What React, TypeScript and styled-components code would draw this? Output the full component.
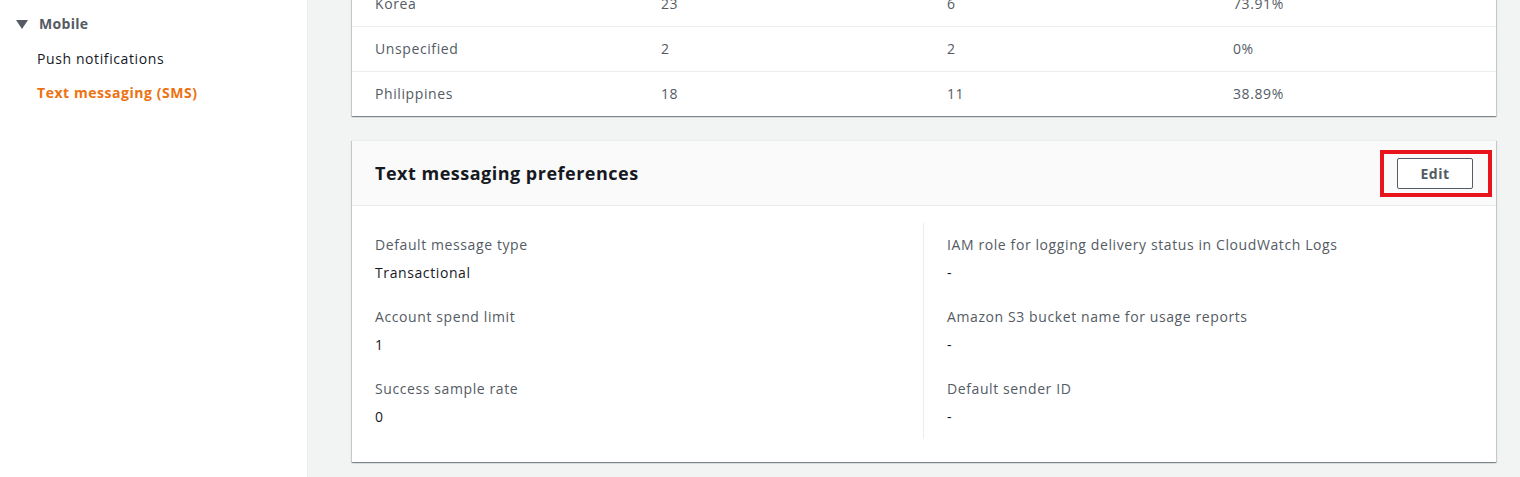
import React from "react";
import styled, { createGlobalStyle } from "styled-components";

const Global = createGlobalStyle`
  html, body { margin: 0; padding: 0; height: 100%; }
  body {
    font-family: "Open Sans", "Noto Sans", "Liberation Sans", Arial, sans-serif;
    font-size: 14px;
    line-height: 22px;
    letter-spacing: 0.6px;
    color: #16191f;
    background: #f2f3f3;
    overflow: hidden;
  }
  #root { height: 100%; }
`;

const Page = styled.div`
  display: flex;
  height: 477px;
  overflow: hidden;
`;

const Sidebar = styled.nav`
  width: 308px;
  flex: none;
  background: #ffffff;
  border-right: 1px solid #eaeded;
  padding-top: 13px;
  box-sizing: border-box;
`;

const SectionHead = styled.div`
  display: flex;
  align-items: center;
  gap: 11px;
  padding-left: 16px;
  font-weight: 700;
  letter-spacing: 0.3px;
  color: #545b64;
  height: 22px;
`;

const Caret = styled.span`
  width: 0;
  height: 0;
  border-left: 6px solid transparent;
  border-right: 6px solid transparent;
  border-top: 9px solid #545b64;
  margin-top: 1px;
`;

const NavList = styled.ul`
  list-style: none;
  margin: 13px 0 0;
  padding: 0 0 0 37px;
  display: flex;
  flex-direction: column;
  gap: 12px;
`;

const NavItem = styled.li<{ $active?: boolean }>`
  color: ${(p) => (p.$active ? "#ec7211" : "#16191f")};
  font-weight: ${(p) => (p.$active ? 700 : 400)};
  letter-spacing: ${(p) => (p.$active ? "0.55px" : "0.6px")};
  line-height: 22px;
`;

const Main = styled.main`
  flex: 1;
  padding: 0 24px 0 44px;
  display: flex;
  flex-direction: column;
  gap: 24px;
  margin-top: -19px;
`;

const Card = styled.section`
  background: #ffffff;
  border-top: 1px solid #eaeded;
  box-shadow: 0 1px 1px 0 rgba(0, 28, 36, 0.3),
    1px 1px 1px 0 rgba(0, 28, 36, 0.15),
    -1px 1px 1px 0 rgba(0, 28, 36, 0.15);
`;

const Table = styled.table`
  width: 100%;
  border-collapse: collapse;
  table-layout: fixed;
`;

const Row = styled.tr<{ $last?: boolean }>`
  border-bottom: ${(p) => (p.$last ? "none" : "1px solid #eaeded")};
`;

const Cell = styled.td`
  padding: 11px 23px 11px 23px;
  height: 22px;
  color: #545b64;
  line-height: 22px;
`;

const Header = styled.div`
  display: flex;
  align-items: center;
  justify-content: space-between;
  height: 64px;
  padding: 0 23px;
  background: #fafafa;
  border-bottom: 1px solid #eaeded;
`;

const Title = styled.h2`
  margin: 0;
  font-size: 18px;
  font-weight: 700;
  line-height: 22px;
  letter-spacing: 0.5px;
  color: #16191f;
`;

const Highlight = styled.div`
  position: relative;
  display: flex;
`;

const RedBox = styled.span`
  position: absolute;
  top: -8px;
  bottom: -8px;
  left: -17px;
  right: -19px;
  border: 4px solid #e8141c;
  pointer-events: none;
`;

const Button = styled.button`
  width: 76px;
  height: 31px;
  box-sizing: border-box;
  background: #ffffff;
  border: 1px solid #545b64;
  border-radius: 2px;
  font-family: inherit;
  font-size: 14px;
  font-weight: 700;
  letter-spacing: 0.5px;
  color: #545b64;
  padding: 0;
  cursor: pointer;
`;

const Body = styled.div`
  display: grid;
  grid-template-columns: calc(50% - 1px) 1fr;
  padding: 17px 0 23px;
`;

const Column = styled.div<{ $divided?: boolean }>`
  display: flex;
  flex-direction: column;
  gap: 22px;
  padding: 11px 23px 11px 23px;
  border-left: ${(p) => (p.$divided ? "1px solid #eaeded" : "none")};
`;

const Pair = styled.div`
  display: flex;
  flex-direction: column;
  gap: 6px;
`;

const Label = styled.div`
  color: #545b64;
  line-height: 22px;
`;

const Value = styled.div`
  color: #16191f;
  line-height: 22px;
`;

const rows = [
  ["Korea", "23", "6", "73.91%"],
  ["Unspecified", "2", "2", "0%"],
  ["Philippines", "18", "11", "38.89%"],
];

const left = [
  ["Default message type", "Transactional"],
  ["Account spend limit", "1"],
  ["Success sample rate", "0"],
];

const right = [
  ["IAM role for logging delivery status in CloudWatch Logs", "-"],
  ["Amazon S3 bucket name for usage reports", "-"],
  ["Default sender ID", "-"],
];

export default function App() {
  return (
    <>
      <Global />
      <Page>
        <Sidebar>
          <SectionHead>
            <Caret />
            Mobile
          </SectionHead>
          <NavList>
            <NavItem>Push notifications</NavItem>
            <NavItem $active>Text messaging (SMS)</NavItem>
          </NavList>
        </Sidebar>
        <Main>
          <Card>
            <Table>
              <tbody>
                {rows.map((r, i) => (
                  <Row key={r[0]} $last={i === rows.length - 1}>
                    {r.map((c, j) => (
                      <Cell key={j}>{c}</Cell>
                    ))}
                  </Row>
                ))}
              </tbody>
            </Table>
          </Card>
          <Card>
            <Header>
              <Title>Text messaging preferences</Title>
              <Highlight>
                <RedBox />
                <Button>Edit</Button>
              </Highlight>
            </Header>
            <Body>
              <Column>
                {left.map(([l, v]) => (
                  <Pair key={l}>
                    <Label>{l}</Label>
                    <Value>{v}</Value>
                  </Pair>
                ))}
              </Column>
              <Column $divided>
                {right.map(([l, v]) => (
                  <Pair key={l}>
                    <Label>{l}</Label>
                    <Value>{v}</Value>
                  </Pair>
                ))}
              </Column>
            </Body>
          </Card>
        </Main>
      </Page>
    </>
  );
}
